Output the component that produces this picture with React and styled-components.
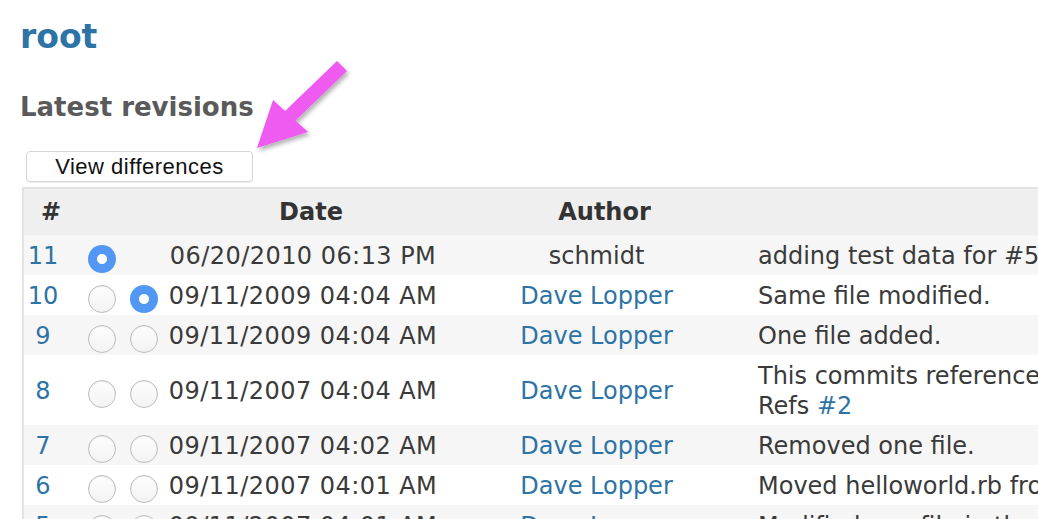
import styled, { createGlobalStyle } from "styled-components";

const GlobalStyle = createGlobalStyle`
  html, body {
    margin: 0;
    padding: 0;
    overflow: hidden;
    background: #fff;
  }
  body {
    font-family: "DejaVu Sans", Verdana, sans-serif;
    color: #333;
  }
`;

const Page = styled.div`
  position: relative;
  padding: 17px 0 0 20px;
  width: 1500px;
`;

const Title = styled.h2`
  margin: 0;
  font-size: 33px;
  line-height: 40px;
  font-weight: 700;
  color: #2d73a6;
`;

const SubTitle = styled.h3`
  margin: 35px 0 0;
  font-size: 26px;
  line-height: 30px;
  font-weight: 700;
  color: #5a5a5a;
`;

const DiffButton = styled.button`
  display: block;
  margin: 29px 0 0 6px;
  width: 227px;
  height: 31px;
  padding: 0;
  background: #fff;
  border: 1px solid #d6d6d6;
  border-radius: 4px;
  box-shadow: 0 1px 1px rgba(0, 0, 0, 0.08);
  font-family: "Liberation Sans", Arial, sans-serif;
  font-size: 22px;
  letter-spacing: 0.5px;
  color: #111;
`;

const Table = styled.table`
  margin: 5px 0 0 2px;
  width: 1400px;
  table-layout: fixed;
  border-collapse: separate;
  border-spacing: 0;
  border-top: 2px solid #e2e2e2;
  border-left: 2px solid #e2e2e2;
  font-size: 24px;
`;

const HeadCell = styled.th`
  height: 46px;
  padding: 0 ${({ $padRight }) => $padRight || 0}px 0 16px;
  background: #efefef;
  font-weight: 700;
  color: #333;
  text-align: center;
`;

const Row = styled.tr`
  background: ${({ $odd }) => ($odd ? "#f6f6f6" : "#fff")};
`;

const Cell = styled.td`
  padding: 6px ${({ $padRight }) => $padRight || 0}px 4px
    ${({ $padLeft }) => $padLeft || 0}px;
  line-height: 30px;
  vertical-align: middle;
  text-align: ${({ $align }) => $align || "center"};
  letter-spacing: ${({ $spaced }) => ($spaced ? "0.45px" : "normal")};
  white-space: nowrap;
  overflow: hidden;
  color: #3a3a3a;
`;

const RadioCell = styled.td`
  padding: 0;
  vertical-align: middle;
`;

const Radio = styled.input`
  appearance: none;
  display: block;
  margin: 8px auto 0;
  width: 28px;
  height: 28px;
  border-radius: 50%;
  box-sizing: border-box;
  border: ${({ checked }) => (checked ? "none" : "1px solid #bcbcbc")};
  background: ${({ checked }) =>
    checked
      ? "radial-gradient(circle, #fff 0 4.5px, #5297f4 5.5px)"
      : "linear-gradient(#fdfdfd, #f3f3f3)"};
  box-shadow: ${({ checked }) =>
    checked ? "none" : "inset 0 1px 1px rgba(0,0,0,0.06)"};
`;

const Link = styled.a`
  color: #2d73a6;
  text-decoration: none;
`;

const Arrow = styled.svg`
  position: absolute;
  left: 240px;
  top: 50px;
  overflow: visible;
`;

const revisions = [
  { id: 11, first: true, date: "06/20/2010 06:13 PM", author: "schmidt", comment: "adding test data for #5 with some more words" },
  { id: 10, second: true, date: "09/11/2009 04:04 AM", author: "Dave Lopper", link: true, comment: "Same file modified." },
  { id: 9, date: "09/11/2009 04:04 AM", author: "Dave Lopper", link: true, comment: "One file added." },
  { id: 8, date: "09/11/2007 04:04 AM", author: "Dave Lopper", link: true, comment: "This commits references an issue.", refs: "#2" },
  { id: 7, date: "09/11/2007 04:02 AM", author: "Dave Lopper", link: true, comment: "Removed one file." },
  { id: 6, date: "09/11/2007 04:01 AM", author: "Dave Lopper", link: true, comment: "Moved helloworld.rb from / to /folder." },
  { id: 5, date: "09/11/2007 04:01 AM", author: "Dave Lopper", link: true, comment: "Modified one file in the folder." },
];

export default function App() {
  return (
    <Page>
      <GlobalStyle />
      <Title>root</Title>
      <SubTitle>Latest revisions</SubTitle>
      <DiffButton>View differences</DiffButton>
      <Table>
        <colgroup>
          <col style={{ width: 57 }} />
          <col style={{ width: 42 }} />
          <col style={{ width: 42 }} />
          <col style={{ width: 276 }} />
          <col style={{ width: 311 }} />
          <col />
        </colgroup>
        <thead>
          <tr>
            <HeadCell $padRight={19}>#</HeadCell>
            <HeadCell />
            <HeadCell />
            <HeadCell>Date</HeadCell>
            <HeadCell>Author</HeadCell>
            <HeadCell />
          </tr>
        </thead>
        <tbody>
          {revisions.map((rev, i) => (
            <Row key={rev.id} $odd={i % 2 === 0}>
              <Cell $padRight={19}>
                <Link href="#">{rev.id}</Link>
              </Cell>
              <RadioCell>
                <Radio type="radio" name="rev" checked={!!rev.first} readOnly />
              </RadioCell>
              <RadioCell>
                {rev.first ? null : (
                  <Radio type="radio" name="rev_to" checked={!!rev.second} readOnly />
                )}
              </RadioCell>
              <Cell $spaced>{rev.date}</Cell>
              <Cell>{rev.link ? <Link href="#">{rev.author}</Link> : rev.author}</Cell>
              <Cell $align="left" $padLeft={6}>
                {rev.comment}
                {rev.refs && (
                  <>
                    <br />
                    Refs <Link href="#">{rev.refs}</Link>
                  </>
                )}
              </Cell>
            </Row>
          ))}
        </tbody>
      </Table>
      <Arrow width="110" height="110" viewBox="0 0 110 110">
        <defs>
          <filter id="shadow" x="-20%" y="-20%" width="140%" height="140%">
            <feDropShadow dx="2" dy="3" stdDeviation="2" floodColor="#000" floodOpacity="0.3" />
          </filter>
        </defs>
        <g filter="url(#shadow)" fill="#ef5af0">
          <polygon points="97,11 107,21 53,73 43,63" />
          <polygon points="17,98 33,50 68,82" />
        </g>
      </Arrow>
    </Page>
  );
}
